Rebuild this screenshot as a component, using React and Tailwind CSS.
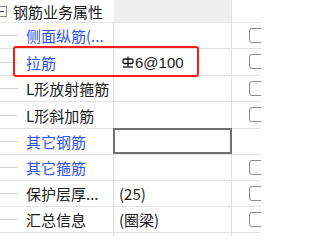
import React from 'react';

const BLUE = 'text-[#2f52f0]';
const DARK = 'text-[#1a1a1a]';

const rows = [
  { name: '侧面纵筋(...', blue: true, check: true, h: 'h-[26px]' },
  { name: '拉筋', blue: true, check: true, rebar: '6@100', h: 'h-[27px]' },
  { name: 'L形放射箍筋', check: true, h: 'h-[26px]' },
  { name: 'L形斜加筋', check: true, h: 'h-[27px]' },
  { name: '其它钢筋', blue: true, edit: true, h: 'h-[26px]' },
  { name: '其它箍筋', blue: true, check: true, h: 'h-[26px]' },
  { name: '保护层厚...', value: '(25)', check: true, h: 'h-[26px]' },
  { name: '汇总信息', value: '(圈梁)', check: true, h: 'h-[26px]' },
];

// HPB300 rebar grade glyph
function RebarMark() {
  return (
    <svg width="12" height="12" viewBox="0 0 12 12" className="shrink-0">
      <g fill="none" stroke="#111" strokeWidth="1.3">
        <path d="M6 0.5 V10.5" />
        <rect x="1" y="3" width="10" height="4.5" rx="1.6" />
        <path d="M1 11 H11" />
      </g>
    </svg>
  );
}

function Row({ row }) {
  return (
    <div className={`flex ${row.h} border-b border-[#e3e3e3]`}>
      <div className="w-[114px] shrink-0 flex items-center border-r border-[#e0e0e0]">
        <span className="w-[18px] h-px bg-[#d6d6d6] shrink-0" />
        <span className={`ml-[8px] whitespace-nowrap ${row.blue ? BLUE : DARK}`}>{row.name}</span>
      </div>
      <div className="relative w-[118px] shrink-0 flex items-center pl-[5px] border-r border-[#e0e0e0]">
        {row.rebar && (
          <span className="flex items-center pl-[3px]">
            <RebarMark />
            <span className={`ml-px ${DARK} font-['Liberation_Sans',sans-serif]`}>{row.rebar}</span>
          </span>
        )}
        {row.value && <span className={DARK}>{row.value}</span>}
        {row.edit && (
          <div className="absolute -left-px -top-px -right-px bottom-0 border-2 border-[#707070] bg-white" />
        )}
      </div>
      <div className="flex-1 flex items-start pt-[5px] pl-[17px]">
        {row.check && (
          <span className="w-[15px] h-[15px] shrink-0 rounded-[3px] border border-[#8a8a8a] bg-white" />
        )}
      </div>
    </div>
  );
}

export default function App() {
  return (
    <div className="relative w-[261px] h-[236px] overflow-hidden bg-white text-[15px] leading-none font-['Noto_Sans_CJK_SC','Noto_Sans',sans-serif]">
      {/* header row */}
      <div className="flex h-[23px] border-b border-[#e3e3e3]">
        <div className="w-[114px] shrink-0 flex items-center">
          <span className="-ml-[4px] w-[11px] h-[11px] shrink-0 border border-[#8a8a8a] flex items-center justify-center">
            <span className="w-[5px] h-px bg-[#333]" />
          </span>
          <span className={`ml-[6px] ${DARK}`}>钢筋业务属性</span>
        </div>
        <div className="w-[118px] shrink-0 bg-[#efefef] border-r border-[#e0e0e0]" />
        <div className="flex-1" />
      </div>

      {rows.map((row) => (
        <Row key={row.name} row={row} />
      ))}

      {/* trailing partial row */}
      <div className="flex h-[10px]">
        <div className="w-[114px] shrink-0 border-r border-[#e0e0e0]" />
        <div className="w-[118px] shrink-0 border-r border-[#e0e0e0]" />
      </div>

      {/* red highlight around 拉筋 */}
      <div className="absolute left-[13px] top-[46px] w-[186px] h-[31px] border-2 border-[#ff1a1a] rounded-[3px]" />
    </div>
  );
}
